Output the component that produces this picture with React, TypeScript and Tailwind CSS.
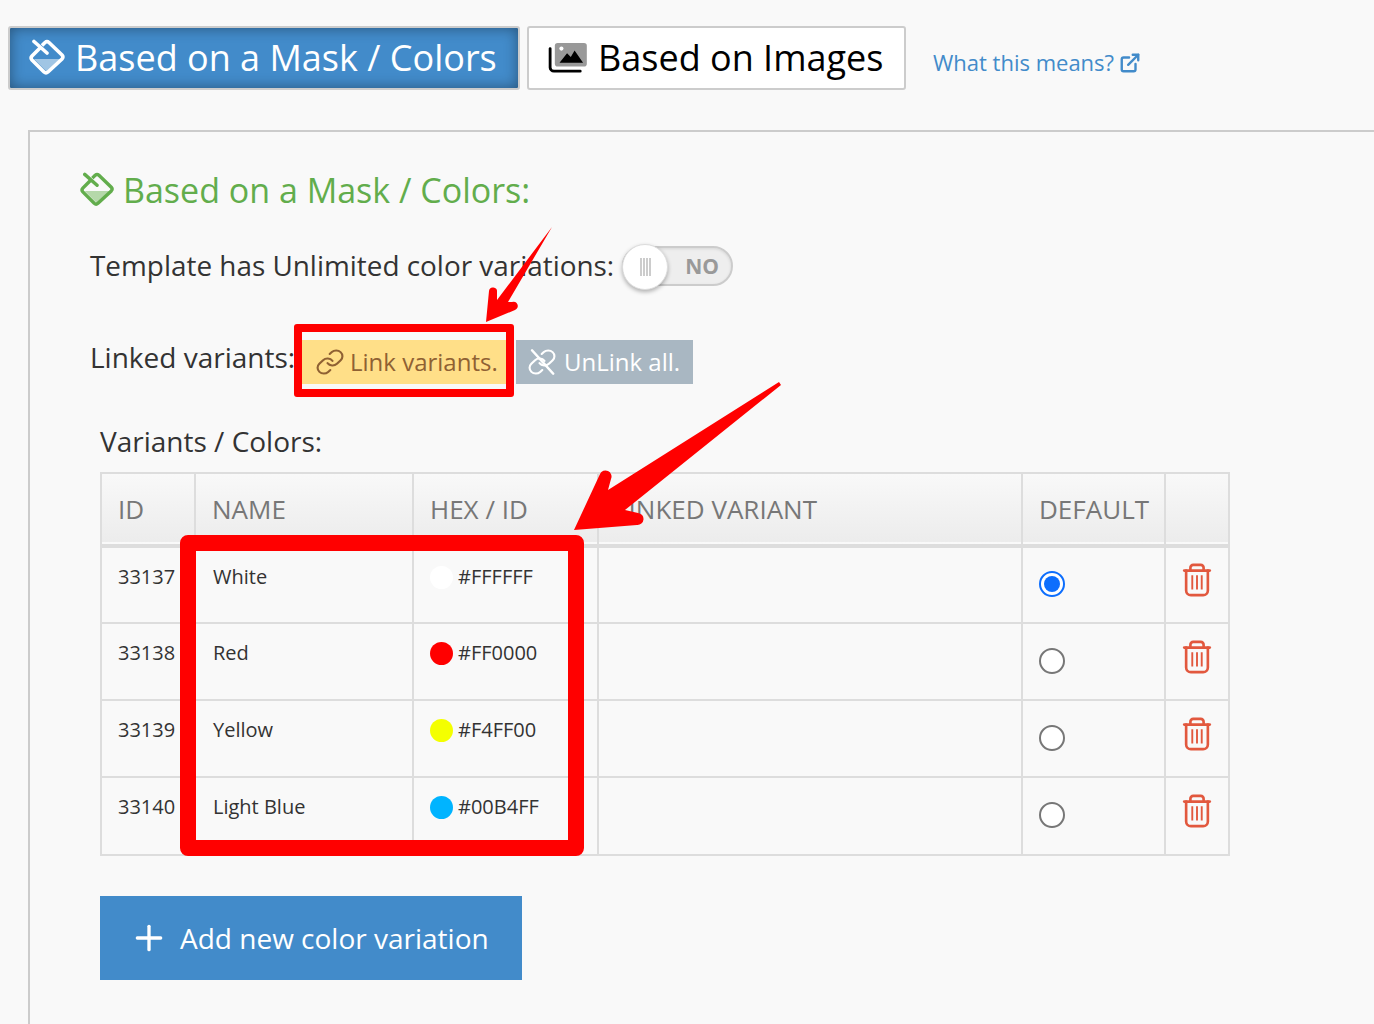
import { ExternalLink, Plus } from 'lucide-react';

const rows = [
  { id: '33137', name: 'White', hex: '#FFFFFF', dot: 'bg-white', checked: true },
  { id: '33138', name: 'Red', hex: '#FF0000', dot: 'bg-[#ff0000]', checked: false },
  { id: '33139', name: 'Yellow', hex: '#F4FF00', dot: 'bg-[#f4ff00]', checked: false },
  { id: '33140', name: 'Light Blue', hex: '#00B4FF', dot: 'bg-[#00b4ff]', checked: false },
];

function DropIcon({ stroke, fill, className }: { stroke: string; fill: string; className: string }) {
  return (
    <svg viewBox="0 0 38 38" className={className} fill="none">
      <path d="M5 20 H32 L18 33 Z" fill={fill} />
      <path
        d="M11 9 L3 17 a3 3 0 0 0 0 4 L15 33 a3 3 0 0 0 4 0 L33 20 a3 3 0 0 0 0 -4 L20 3.500 a3 3 0 0 0 -4 0 L13 6.500"
        stroke={stroke}
        strokeWidth="3.600"
      />
      <path d="M5 2.500 L18 14" stroke={stroke} strokeWidth="3.600" strokeLinecap="round" />
    </svg>
  );
}

function ImagesIcon() {
  return (
    <svg viewBox="0 0 42 34" className="h-[32px] w-[40px]" fill="none">
      <rect x="7" y="1" width="34" height="25" rx="3" fill="#999" />
      <circle cx="14" cy="7" r="2.2" fill="#fff" />
      <path d="M12 22 L20 12 L24 16 L28 9 L37 22 Z" fill="#000" />
      <path d="M2 7 V27 a4 4 0 0 0 4 4 H34" stroke="#000" strokeWidth="3" strokeLinecap="round" />
    </svg>
  );
}

function LinkIcon({ color, broken }: { color: string; broken?: boolean }) {
  return (
    <svg viewBox="0 0 24 24" className="h-[28px] w-[30px]" fill="none" stroke={color} strokeWidth="1.7" strokeLinecap="round" strokeLinejoin="round" preserveAspectRatio="none">
      <path d="M10 13a5 5 0 0 0 7.54.54l3-3a5 5 0 0 0-7.07-7.07l-1.72 1.71" />
      <path d="M14 11a5 5 0 0 0-7.54-.54l-3 3a5 5 0 0 0 7.07 7.07l1.71-1.71" />
      {broken && <path d="M4 2 L21 22" strokeWidth="2" />}
    </svg>
  );
}

function TrashIcon() {
  return (
    <svg viewBox="0 0 30 36" className="h-[34px] w-[30px]" fill="none" stroke="#e2583e" strokeWidth="2.8" strokeLinecap="round" strokeLinejoin="round">
      <path d="M1.500 8 H28.500" />
      <path d="M8 7 V5 a3 3 0 0 1 3 -3 h8 a3 3 0 0 1 3 3 V7" />
      <path d="M3.500 8 V29 a5 5 0 0 0 5 5 h13 a5 5 0 0 0 5 -5 V8" />
      <path d="M10 13 V28 M15 13 V28 M20 13 V28" strokeWidth="2" strokeLinecap="butt" />
    </svg>
  );
}

export default function App() {
  return (
    <div className="relative h-[1024px] overflow-hidden bg-[#f9f9f9] pt-[26px] pl-[8px] font-['Open_Sans',sans-serif] text-[#333]">
      <div className="flex items-center">
        <button className="flex h-[64px] w-[512px] items-center rounded-[3px] border-2 border-[#ccc] bg-[#428bca] pl-[19px] text-[36px] text-white shadow-[inset_0_0_14px_rgba(0,0,0,0.4)]">
          <DropIcon stroke="#fff" fill="#a0c5e4" className="mr-[8px] h-[38px] w-[38px]" />
          Based on a Mask / Colors
        </button>
        <button className="ml-[7px] flex h-[64px] w-[379px] items-center rounded-[3px] border-2 border-[#ccc] bg-white pl-[19px] text-[36px] text-black">
          <ImagesIcon />
          <span className="ml-[10px]">Based on Images</span>
        </button>
        <a className="ml-[27px] mt-[9px] flex items-center text-[22px] text-[#428bca]">
          What this means?
          <ExternalLink className="ml-[5px] h-[22px] w-[22px]" strokeWidth={2.6} />
        </a>
      </div>

      <div className="ml-[20px] mt-[40px] h-[900px] border-t-2 border-l-2 border-[#ccc] pl-[50px] pt-[35px]">
        <h2 className="flex items-center text-[34px] leading-[46px] text-[#62ad4c]">
          <DropIcon stroke="#62ad4c" fill="#b5d8aa" className="mr-[8px] h-[36px] w-[36px]" />
          <span className="-ml-[1px]">Based on a Mask / Colors:</span>
        </h2>

        <div className="ml-[10px] mt-[31px] flex h-[44px] items-center text-[27.9px]">
          <span>Template has Unlimited color variations:</span>
          <div className="relative ml-[8px] h-[40px] w-[111px] rounded-full border-2 border-[#ccc] bg-[#eee] shadow-[inset_0_1px_3px_rgba(0,0,0,0.1)]">
            <div className="absolute -left-[2px] -top-[4px] flex h-[46px] w-[46px] items-center justify-center rounded-full border border-[#ddd] bg-white shadow-[0_2px_4px_rgba(0,0,0,0.3)]">
              <div className="flex gap-[1px]">
                <span className="h-[18px] w-[2px] bg-[#ccc]" />
                <span className="h-[18px] w-[2px] bg-[#ccc]" />
                <span className="h-[18px] w-[2px] bg-[#ccc]" />
                <span className="h-[18px] w-[2px] bg-[#ccc]" />
              </div>
            </div>
            <span className="absolute left-[61px] top-[1px] text-[21px] leading-[34px] font-bold text-[#999]">NO</span>
          </div>
        </div>

        <div className="ml-[10px] mt-[52px] flex items-center text-[28px]">
          <span className="-mt-[10px] w-[212px] whitespace-nowrap">Linked variants:</span>
          <span className="flex h-[44px] w-[204px] items-center whitespace-nowrap bg-[#ffdf88] pl-[13px] text-[24px] text-[#8f6133]">
            <LinkIcon color="#8f6133" />
            <span className="ml-[5px]">Link variants.</span>
          </span>
          <span className="ml-[10px] flex h-[44px] w-[177px] items-center whitespace-nowrap bg-[#a9b7c2] pl-[11px] text-[24px] text-white">
            <LinkIcon color="#fff" broken />
            <span className="ml-[7px]">UnLink all.</span>
          </span>
        </div>

        <p className="ml-[20px] mt-[37px] text-[28px] leading-[40px]">Variants / Colors:</p>

        <table className="ml-[20px] mt-[11px] w-[1128px] table-fixed border-collapse border-2 border-[#ddd] text-[20px]">
          <colgroup>
            <col className="w-[94px]" />
            <col className="w-[218px]" />
            <col className="w-[185px]" />
            <col className="w-[424px]" />
            <col className="w-[143px]" />
            <col className="w-[64px]" />
          </colgroup>
          <thead>
            <tr className="h-[73px] border-b-[4px] border-[#ddd] bg-gradient-to-b from-[#f9f9f9] to-[#ececec] text-left text-[26px] font-normal text-[#777]">
              <th className="border-2 border-[#ddd] pl-[16px] font-normal">ID</th>
              <th className="border-2 border-[#ddd] pl-[16px] font-normal">NAME</th>
              <th className="border-2 border-[#ddd] pl-[16px] font-normal">HEX / ID</th>
              <th className="border-2 border-[#ddd] pl-[16px] font-normal">LINKED VARIANT</th>
              <th className="border-2 border-[#ddd] pl-[16px] font-normal">DEFAULT</th>
              <th className="border-2 border-[#ddd]" />
            </tr>
          </thead>
          <tbody>
            {rows.map((r) => (
              <tr key={r.id} className="h-[77px] last:h-[78px]">
                <td className="border-2 border-[#ddd] pl-[16px] pt-[14px] align-top">{r.id}</td>
                <td className="border-2 border-[#ddd] pl-[17px] pt-[14px] align-top">{r.name}</td>
                <td className="border-2 border-[#ddd] pl-[16px] pt-[14px] align-top">
                  <div className="flex items-center">
                    <span className={`h-[23px] w-[23px] rounded-full ${r.dot}`} />
                    <span className="ml-[5px]">{r.hex}</span>
                  </div>
                </td>
                <td className="border-2 border-[#ddd]" />
                <td className="border-2 border-[#ddd] pl-[16px] pb-[2px]">
                  {r.checked ? (
                    <span className="flex h-[26px] w-[26px] items-center justify-center rounded-full border-2 border-[#0d6efd] bg-white">
                      <span className="h-[16px] w-[16px] rounded-full bg-[#0d6efd]" />
                    </span>
                  ) : (
                    <span className="block h-[26px] w-[26px] rounded-full border-2 border-[#777] bg-white" />
                  )}
                </td>
                <td className="border-2 border-[#ddd] pl-[16px] pb-[10px]">
                  <TrashIcon />
                </td>
              </tr>
            ))}
          </tbody>
        </table>

        <button className="ml-[20px] mt-[40px] flex h-[84px] w-[422px] items-center bg-[#428bca] pl-[29px] text-[28px] text-white">
          <Plus className="h-[40px] w-[40px]" strokeWidth={2} />
          <span className="ml-[11px]">Add new color variation</span>
        </button>
      </div>

      {/* red annotations drawn over the page */}
      <div className="absolute left-[294px] top-[324px] h-[73px] w-[220px] rounded-[3px] border-[8px] border-[#ff0000]" />
      <div className="absolute left-[180px] top-[535px] h-[321px] w-[404px] rounded-[8px] border-[16px] border-[#ff0000]" />
      <svg className="absolute left-0 top-0 h-[1024px] w-[1374px]" viewBox="0 0 1374 1024">
        <path d="M552 227 L497 300 L497 292 a4 4 0 0 0 -8 -1 L486 322 L515 310 a4 4 0 0 0 -3 -8 L508 302 Z" fill="#ff0000" />
        <path d="M779 382 L608 490 L611 479 a6 6 0 0 0 -11 -5 L574 530 L637 525 a6 6 0 0 0 1 -12 L625 510 L781 385 Z" fill="#ff0000" />
      </svg>
    </div>
  );
}
